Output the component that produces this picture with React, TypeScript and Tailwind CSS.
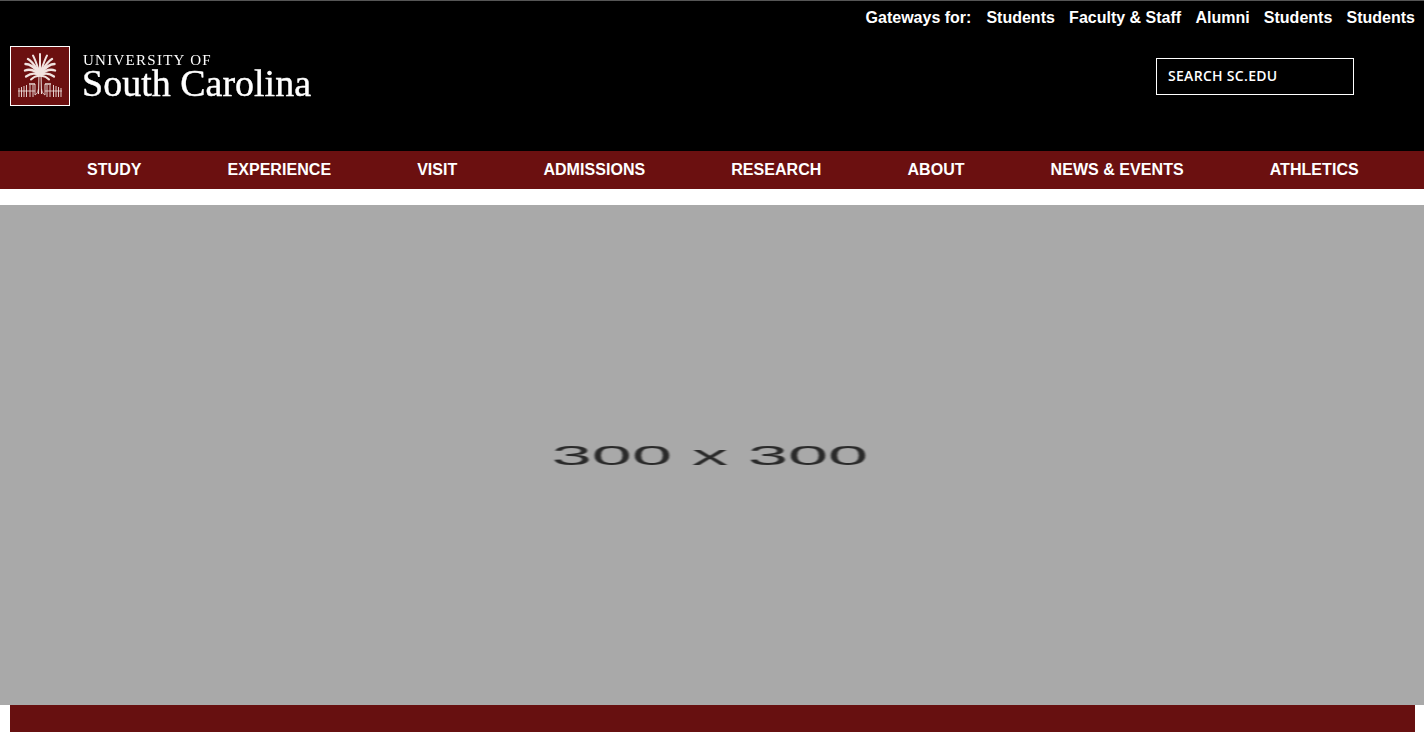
const gateways = ["Students", "Faculty & Staff", "Alumni", "Students", "Students"];
const navItems = ["STUDY", "EXPERIENCE", "VISIT", "ADMISSIONS", "RESEARCH", "ABOUT", "NEWS & EVENTS", "ATHLETICS"];

function PalmLogo() {
  const ink = "#f1e3e0";
  return (
    <svg viewBox="0 0 58 58" className="h-[58px] w-[58px]" fill="none">
      {/* fronds, drooping bands on each side of the crown */}
      <g stroke={ink} strokeLinecap="round">
        <path d="M29 24 L29 7" strokeWidth="2" />
        <path d="M28 24 C26 18 24 12 22 8.5" strokeWidth="2" />
        <path d="M30 24 C32 18 34 12 36 8.5" strokeWidth="2" />
        <path d="M28 25 C24 19 21 14 17 12" strokeWidth="2.4" />
        <path d="M30 25 C34 19 37 14 41 12" strokeWidth="2.4" />
        <path d="M28 26 C24 21 19 17 14.5 17" strokeWidth="2.4" />
        <path d="M30 26 C34 21 39 17 43.5 17" strokeWidth="2.4" />
        <path d="M28 27 C23 23 18 22 14 23.5" strokeWidth="2.4" />
        <path d="M30 27 C35 23 40 22 44 23.5" strokeWidth="2.4" />
        <path d="M28 28 C24 26 20 26 15 29.5" strokeWidth="2.2" />
        <path d="M30 28 C34 26 38 26 43 29.5" strokeWidth="2.2" />
        <path d="M28 29 C25 28.5 23 29.5 20 32.5" strokeWidth="2" />
        <path d="M30 29 C33 28.5 35 29.5 38 32.5" strokeWidth="2" />
      </g>
      {/* trunk */}
      <path d="M28 27 L27.5 47 M30 27 L30.5 47" stroke={ink} strokeWidth="1" />
      {/* gate */}
      <path
        d="M8 41V50M10.5 40V50M13 39V50M15.5 38V50M19 38V50M22 38V50M36 38V50M39 38V50M42.5 38V50M45 39V50M47.5 40V50M50 41V50"
        stroke={ink}
        strokeWidth="0.9"
      />
      <path d="M7 44H24M34 44H51" stroke={ink} strokeWidth="0.8" />
      <path d="M18 37H24M34 37H40" stroke="#c9a6a2" strokeWidth="2" />
      <path d="M24 37V48M34 37V48" stroke={ink} strokeWidth="0.9" />
      <path d="M24 48 C26 47 27 45 27.5 42M34 48 C32 47 31 45 30.5 42" stroke={ink} strokeWidth="0.8" />
    </svg>
  );
}

export default function App() {
  return (
    <div className="h-[732px] overflow-hidden bg-white font-['Liberation_Sans',Arial,sans-serif]">
      {/* Top header */}
      <header className="h-[151px] border-t border-[#555555] bg-black text-white">
        <div className="flex justify-end pr-[9px] pt-[8px] text-base leading-[18px] font-bold">
          <span className="mr-[15px]">Gateways for:</span>
          <div className="flex gap-[14.25px]">
            {gateways.map((g, i) => (
              <a key={i} href="#">
                {g}
              </a>
            ))}
          </div>
        </div>

        <div className="flex items-start justify-between pr-[70px] pl-[10px] pt-[19px]">
          <a href="#" className="flex">
            <div className="h-[60px] w-[60px] border border-white bg-[#6b1010] blur-[0.3px]">
              <PalmLogo />
            </div>
            <div className="ml-[13px] font-['Liberation_Serif',serif] text-white blur-[0.3px]">
              <div className="mt-[6px] text-[15px] leading-[16px] tracking-[1.27px]">UNIVERSITY OF</div>
              <div className="ml-[-1px] text-[38px] leading-[30px] [-webkit-text-stroke:0.4px_white]">
                South Carolina
              </div>
            </div>
          </a>
          <div className="mt-[12px] flex h-[37px] w-[198px] items-center border border-white pb-[2px] pl-[11px] font-['Open_Sans',sans-serif] text-[14px] font-semibold tracking-[0.3px]">
            SEARCH SC.EDU
          </div>
        </div>
      </header>

      {/* Main nav */}
      <nav className="flex h-[38px] items-center bg-[#6b1010] pl-[44px] text-base font-bold tracking-[0.05px] text-white">
        {navItems.map((item) => (
          <a key={item} href="#" className="px-[43px]">
            {item}
          </a>
        ))}
      </nav>

      {/* Placeholder hero */}
      <div className="mt-[16px] flex h-[500px] items-center justify-center bg-[#a9a9a9] pr-[5px] pb-[2px]">
        <span className="scale-x-[4.8] scale-y-[1.9] text-[15px] leading-none whitespace-nowrap text-[#2a2a2a] blur-[0.25px]">
          300 x 300
        </span>
      </div>

      <div className="ml-[10px] mr-[9px] h-[27px] bg-[#671010]" />
    </div>
  );
}
